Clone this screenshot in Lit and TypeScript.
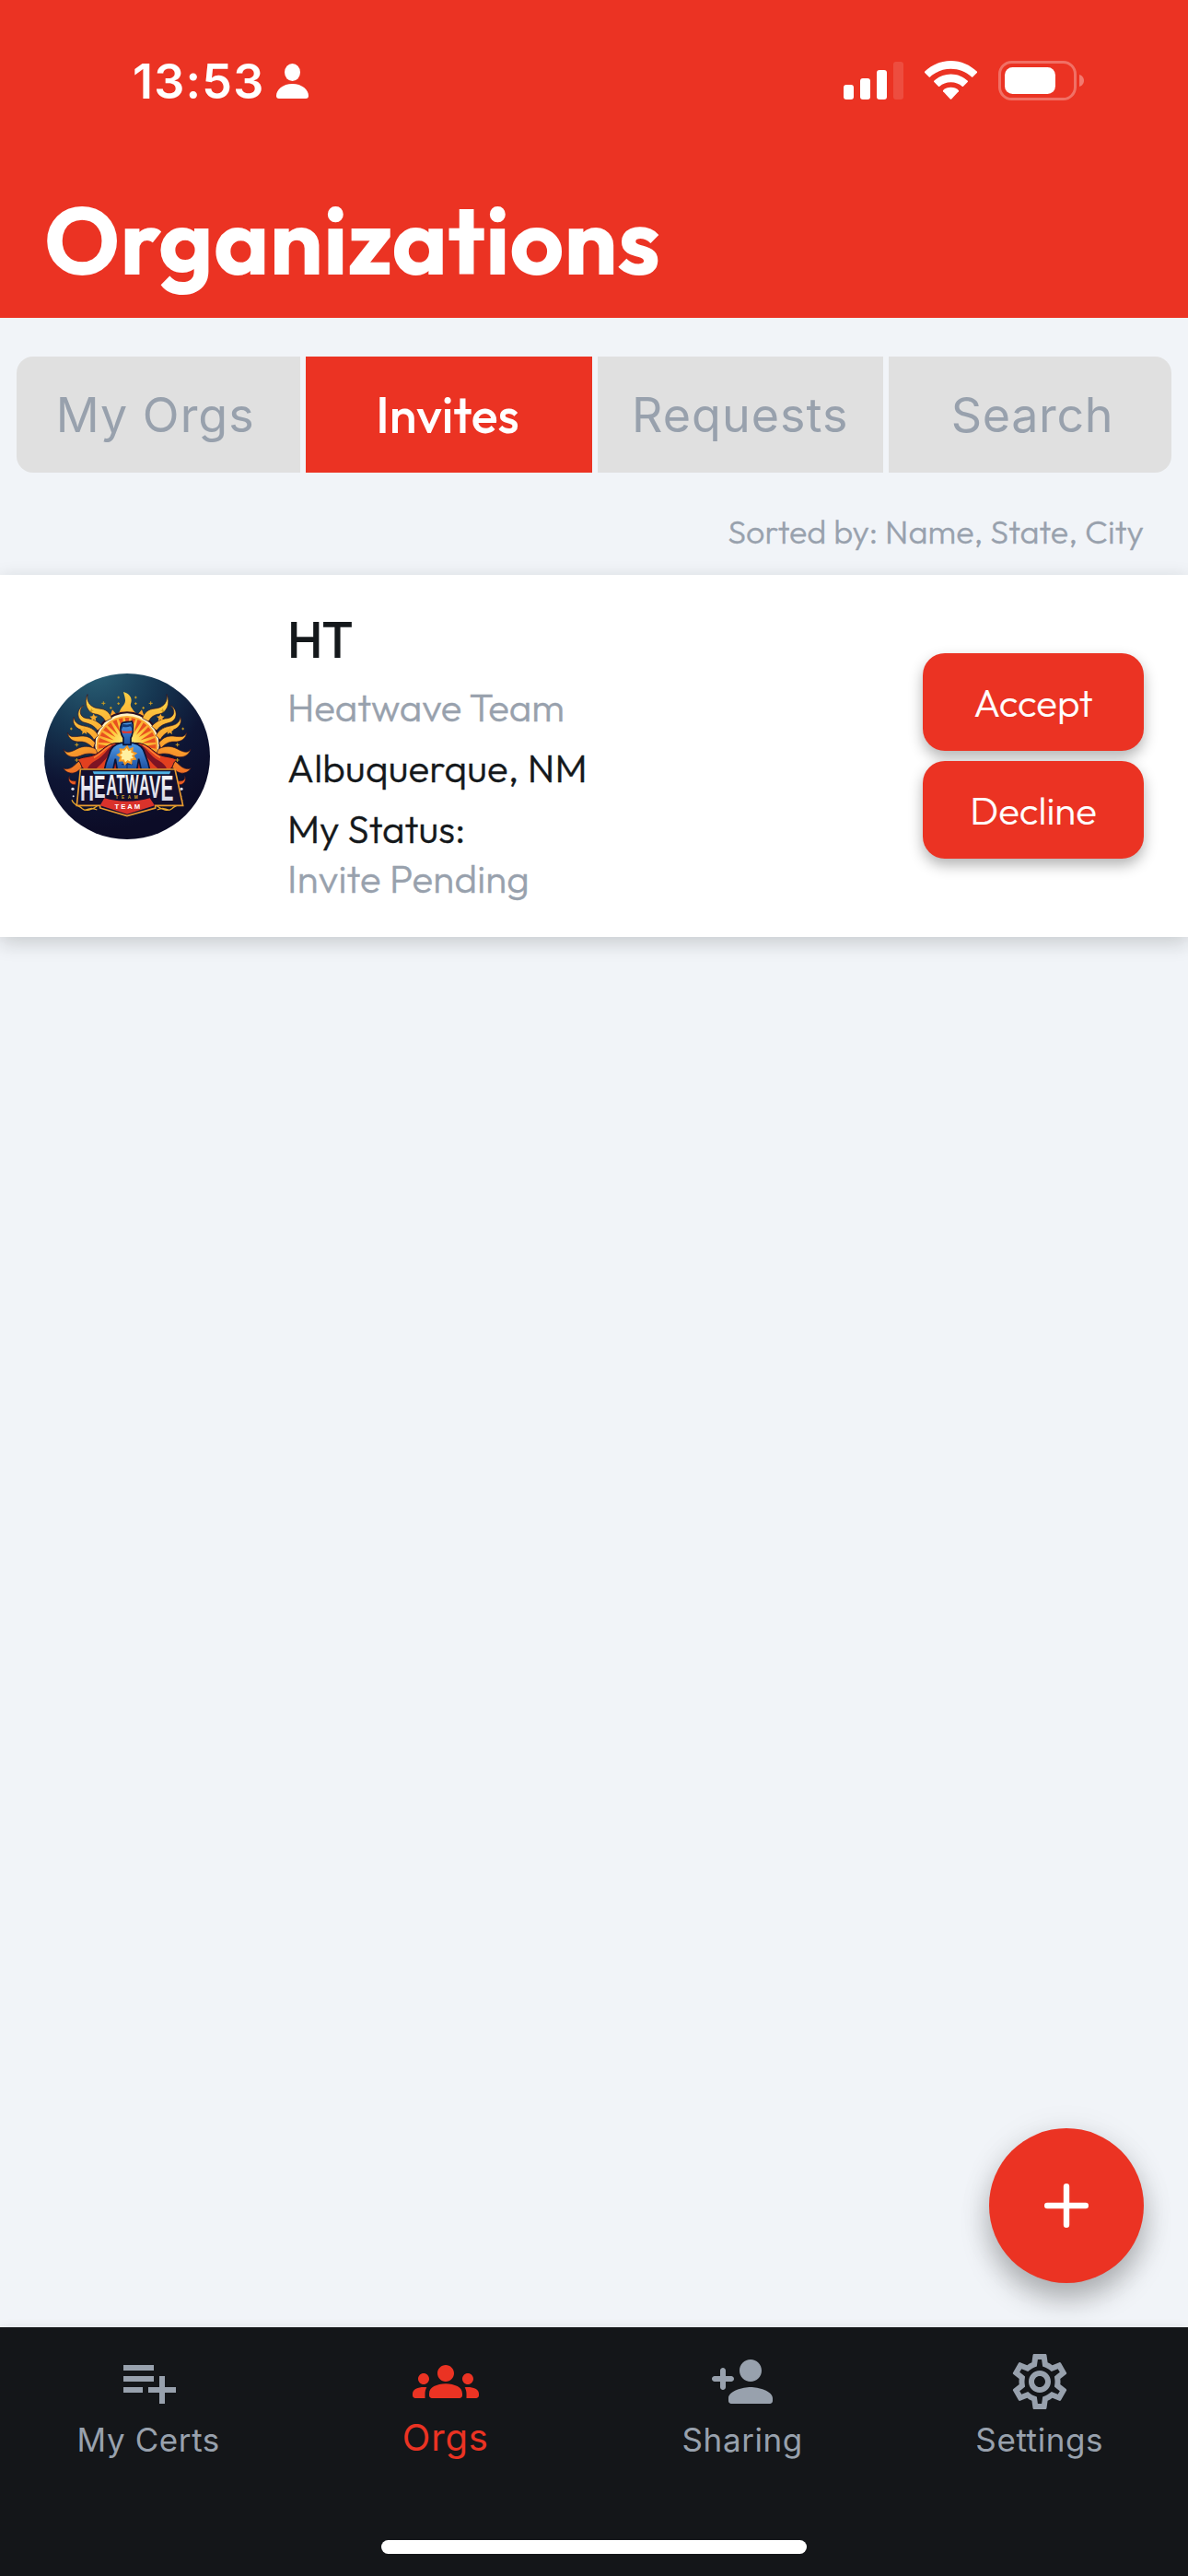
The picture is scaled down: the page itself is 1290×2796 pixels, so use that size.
import { LitElement, html, svg, css } from "lit";
import { customElement, property } from "lit/decorators.js";
import { classMap } from "lit/directives/class-map.js";

/** Round crest of the Heatwave Team. */
@customElement("team-crest")
export class TeamCrest extends LitElement {
  static styles = css`
    :host { display: block; width: 180px; height: 180px; }
    svg { display: block; width: 100%; height: 100%; }
  `;

  /** Flames, stars and cape for the left side; mirrored for the right. */
  private side() {
    return svg`
      <g fill="url(#flame)" stroke="#3a1420" stroke-width="2">
        <path d="M141 68 C136 92 152 112 178 114 C202 116 214 128 220 146 L200 156 C192 140 180 134 166 132 C140 128 128 96 141 68Z"/>
        <path d="M128 104 C112 118 114 142 138 146 C160 148 178 158 190 172 L174 186 C162 168 146 164 132 160 C104 152 104 116 128 104Z"/>
        <path d="M97 142 C98 164 116 168 134 172 C154 176 168 186 176 202 L162 216 C152 196 136 190 120 184 C98 176 90 158 97 142Z"/>
        <path d="M76 192 C82 210 100 206 120 204 C142 202 156 212 166 226 L160 244 C148 230 134 222 118 222 C94 224 78 212 76 192Z"/>
        <path d="M63 246 C70 262 88 256 106 246 C128 234 148 236 168 246 L176 266 C152 258 136 260 118 268 C94 278 68 270 63 246Z"/>
        <path d="M62 308 C78 316 92 306 106 292 C120 278 136 274 152 278 L146 300 C128 298 122 306 112 316 C96 330 72 326 62 308Z"/>
        <path d="M82 334 C80 346 88 352 104 350 L102 362 C84 364 76 348 82 334Z"/>
      </g>
      <path d="M244 226 C206 224 190 252 166 264 C146 274 124 270 106 282 C122 286 116 302 130 312 L216 312 L230 262Z" fill="#e2401f" stroke="#240d1d" stroke-width="3"/>
      <path d="M226 232 C204 244 196 270 166 284 C152 292 144 300 140 312 L168 312 C184 296 206 276 216 256Z" fill="#7d1424"/>
      <path d="M218 234 C196 244 186 262 162 274" fill="none" stroke="#ff8a35" stroke-width="4"/>
      <g fill="#f5a82c">
        <path d="M161 131 l4 8 9 1 -7 6 2 9 -8 -5 -8 5 2 -9 -7 -6 9 -1Z"/>
        <path d="M131 174 l4 8 9 1 -7 6 2 9 -8 -5 -8 5 2 -9 -7 -6 9 -1Z"/>
      </g>
      <g stroke="#c99b22" stroke-width="3">
        <path d="M193 91v12M187 97h12M242 74v8M238 78h8M242 94v8M238 98h8M154 115v12M148 121h12M106 226v12M100 232h12M106 276v12M100 282h12M217 108v8M213 112h8M88 176v8M84 180h8"/>
      </g>
      <circle cx="93" cy="376" r="5" fill="#d9dbe8"/>
      <circle cx="95" cy="400" r="3" fill="#d9dbe8"/>
      <path d="M90 412 C98 432 112 428 124 440 C136 450 156 444 172 432 M132 446 C146 440 154 436 172 444" fill="none" stroke="#e3a42b" stroke-width="4"/>
    `;
  }

  render() {
    const rays = Array.from({ length: 15 }, (_, i) => 180 + i * 12.86);
    return html`
      <svg viewBox="0 0 540 540" role="img" aria-label="Heatwave Team">
        <defs>
          <radialGradient id="night" cx="0.3" cy="-0.05" r="1">
            <stop offset="0" stop-color="#2c6479"/>
            <stop offset="0.4" stop-color="#163752"/>
            <stop offset="0.72" stop-color="#0e1534"/>
            <stop offset="1" stop-color="#0c0c27"/>
          </radialGradient>
          <linearGradient id="flame" gradientUnits="userSpaceOnUse" x1="90" y1="60" x2="180" y2="370">
            <stop offset="0" stop-color="#fbe04e"/>
            <stop offset="0.55" stop-color="#fba32d"/>
            <stop offset="1" stop-color="#e5421f"/>
          </linearGradient>
          <radialGradient id="sun" gradientUnits="userSpaceOnUse" cx="270" cy="225" r="104">
            <stop offset="0" stop-color="#fff08a"/>
            <stop offset="0.55" stop-color="#fdc93a"/>
            <stop offset="1" stop-color="#f9992d"/>
          </radialGradient>
          <linearGradient id="suit" x1="0" y1="0" x2="0" y2="1">
            <stop offset="0" stop-color="#4f9be6"/>
            <stop offset="1" stop-color="#1c4fa0"/>
          </linearGradient>
          <linearGradient id="steel" x1="0" y1="0" x2="0" y2="1">
            <stop offset="0" stop-color="#ffffff"/>
            <stop offset="1" stop-color="#cfd0e0"/>
          </linearGradient>
          <clipPath id="disc"><circle cx="270" cy="270" r="270"/></clipPath>
        </defs>
        <g clip-path="url(#disc)">
          <rect width="540" height="540" fill="url(#night)"/>
          <path d="M246 134 C242 112 266 104 264 86 C263 76 260 68 258 60 C280 66 288 82 282 98 C278 112 294 116 294 134Z" fill="url(#flame)"/>
          <path d="M196 150 L202 126 214 140 222 118 236 134 250 120 270 130 290 120 304 134 318 118 326 140 338 126 344 150Z" fill="#fba32d"/>
          <circle cx="270" cy="234" r="110" fill="#2b0f22"/>
          <circle cx="270" cy="234" r="104" fill="#fff3c4"/>
          <circle cx="270" cy="238" r="100" fill="url(#sun)"/>
          ${rays.map((a) => svg`<path d="M318 238 L364 231 V245Z" fill="#e8501f" transform="rotate(${a} 270 238)"/>`)}
          <g transform="matrix(-1 0 0 1 540 0)">${this.side()}</g>
          <g>${this.side()}</g>
          <path d="M222 312 L232 250 H308 L318 312Z" fill="#b3241f"/>
          <path d="M196 314 C200 290 206 276 212 262 C216 240 232 230 250 226 H290 C308 230 324 240 328 262 C334 276 340 290 344 314 L316 314 L308 278 L302 314 H238 L232 278 L224 314Z" fill="url(#suit)" stroke="#0c1233" stroke-width="5"/>
          <path d="M254 282 h32 M252 296 h36 M270 280 v32" stroke="#12316f" stroke-width="4"/>
          <path d="M258 232 V210 C248 196 246 176 252 164 C256 154 276 160 286 156 L289 166 C290 186 290 198 282 210 V232Z" fill="url(#suit)" stroke="#0c1233" stroke-width="5"/>
          <path d="M251 184 C250 174 252 168 256 165 C264 166 276 168 284 163 L289 184 C284 178 284 174 280 172 C272 176 262 175 257 173Z" fill="#123a78"/>
          <path d="M252 186 L269 189 287 186 284 195 269 194 256 195Z" fill="#e8372a"/>
          <path d="M270 238 l6 11 11 -5 -1 12 12 4 -9 8 7 10 -12 2 -1 12 -11 -6 -9 9 -5 -12 -12 1 4 -12 -10 -7 11 -6 -3 -12 12 1Z" fill="#fff0a0" stroke="#f59a24" stroke-width="6"/>
          <path d="M118 312 H426 L452 430 H362 V438 L270 464 182 438 V430 H106Z" fill="#140f2d" stroke="#e79a2f" stroke-width="5"/>
          <path d="M158 319 H412 L408 328 H162Z" fill="#4db2e6"/>
          <path d="M196 406 C240 420 300 420 344 406 L360 430 L270 458 182 430Z" fill="#d9322b"/>
          <g transform="scale(0.53 1)" fill="url(#steel)" font-family="'Liberation Sans', sans-serif" font-weight="700">
            <text y="414" font-size="118"><tspan x="221">H</tspan><tspan x="305" y="404" font-size="106">E</tspan><tspan x="380" y="396" font-size="94">A</tspan><tspan x="444" y="389" font-size="86">T</tspan><tspan x="499" y="389" font-size="86">W</tspan><tspan x="582" y="396" font-size="94">A</tspan><tspan x="646" y="404" font-size="106">V</tspan><tspan x="716" y="414" font-size="118">E</tspan></text>
          </g>
          <text x="274" y="407" fill="#d9a92e" font-family="'Liberation Sans', sans-serif" font-weight="700" font-size="14" letter-spacing="11" text-anchor="middle">TEAM</text>
          <text x="274" y="440" fill="#ffffff" font-family="'Liberation Sans', sans-serif" font-weight="700" font-size="23" letter-spacing="6" text-anchor="middle">TEAM</text>
        </g>
      </svg>
    `;
  }
}

@customElement("status-bar")
export class StatusBar extends LitElement {
  static styles = css`
    :host { display: flex; justify-content: space-between; align-items: center; height: 176px; padding: 0 113px 0 144px; color: #fff; }
    .group { display: flex; align-items: center; }
    .left { gap: 12px; }
    .right { gap: 23px; }
    .time { padding-top: 1px; font: 600 52px/64px Inter, "Liberation Sans", sans-serif; letter-spacing: 1.24px; }
    svg { display: block; fill: currentColor; }
  `;
  render() {
    return html`
      <div class="group left">
        <span class="time">13:53</span>
        <svg width="35" height="38" viewBox="0 0 35 38">
          <ellipse cx="17.5" cy="9.5" rx="8.5" ry="9.5"/>
          <path d="M17.5 22 C28 22 35 28.5 35 35 Q35 38 32 38 H3 Q0 38 0 35 C0 28.5 7 22 17.5 22Z"/>
        </svg>
      </div>
      <div class="group right">
        <svg width="65" height="44" viewBox="0 0 65 44">
          <rect x="0" y="26" width="11" height="16" rx="3"/>
          <rect x="18" y="19" width="11" height="23" rx="3"/>
          <rect x="36" y="10" width="11" height="32" rx="3"/>
          <rect x="54" y="1" width="11" height="41" rx="3" opacity="0.13"/>
        </svg>
        <svg width="57" height="44" viewBox="0 0 57 44">
          <path d="M28.5 0 C39.5 0 49.5 4.5 57 11.8 Q57.4 12.4 56.8 13 L52.3 17.5 Q51.6 18 51 17.5 C45 12 37 8.8 28.5 8.8 C20 8.8 12 12 6 17.5 Q5.4 18 4.7 17.5 L0.2 13 Q-0.4 12.4 0 11.8 C7.5 4.5 17.5 0 28.5 0Z"/>
          <path d="M28.5 14.5 C35.5 14.5 42 17.3 46.8 21.8 Q47.3 22.4 46.7 23 L42 27.7 Q41.3 28.2 40.7 27.7 C37.5 24.9 33.3 23.2 28.5 23.2 C23.7 23.2 19.5 24.9 16.3 27.7 Q15.7 28.2 15 27.7 L10.3 23 Q9.7 22.4 10.2 21.8 C15 17.3 21.5 14.5 28.5 14.5Z"/>
          <path d="M28.5 28.8 C31.7 28.8 34.7 30 36.9 32 Q37.4 32.6 36.9 33.2 L29.2 41.5 Q28.5 42.2 27.8 41.5 L20.1 33.2 Q19.6 32.6 20.1 32 C22.3 30 25.3 28.8 28.5 28.8Z"/>
        </svg>
        <svg width="93" height="44" viewBox="0 0 93 44">
          <rect x="1.5" y="1.5" width="82" height="40" rx="13" fill="none" stroke="#fff" stroke-width="3" opacity="0.3"/>
          <rect x="7" y="7" width="55" height="29" rx="8.5"/>
          <path d="M88 15 C91.5 16 93 19 93 21.5 C93 24 91.5 27 88 28Z" opacity="0.35"/>
        </svg>
      </div>
    `;
  }
}

interface NavItem {
  id: string;
  label: string;
  icon: unknown;
}

const NAV: NavItem[] = [
  { id: "certs", label: "My Certs", icon: svg`<path d="M14 10H3v2h11v-2zm0-4H3v2h11V6zm4 8v-4h-2v4h-4v2h4v4h2v-4h4v-2h-4zM3 16h7v-2H3v2z"/>` },
  { id: "orgs", label: "Orgs", icon: svg`<path d="M12 12.75c1.63 0 3.07.39 4.24.9 1.08.48 1.76 1.56 1.76 2.73V17c0 .55-.45 1-1 1H7c-.55 0-1-.45-1-1v-.61c0-1.18.68-2.26 1.76-2.73 1.17-.52 2.61-.91 4.24-.91zM4 13c1.1 0 2-.9 2-2s-.9-2-2-2-2 .9-2 2 .9 2 2 2zm1.13 1.1C4.76 14.04 4.39 14 4 14c-.99 0-1.93.21-2.78.58C.48 14.9 0 15.62 0 16.43V17c0 .55.45 1 1 1h3.5v-1.61c0-.83.23-1.61.63-2.29zM20 13c1.1 0 2-.9 2-2s-.9-2-2-2-2 .9-2 2 .9 2 2 2zm4 3.43c0-.81-.48-1.53-1.22-1.85-.85-.37-1.79-.58-2.78-.58-.39 0-.76.04-1.13.1.4.68.63 1.46.63 2.29V18H23c.55 0 1-.45 1-1v-.57zM12 6c1.66 0 3 1.34 3 3s-1.34 3-3 3-3-1.34-3-3 1.34-3 3-3z"/>` },
  { id: "sharing", label: "Sharing", icon: svg`<path d="M15 12c2.21 0 4-1.79 4-4s-1.79-4-4-4-4 1.79-4 4 1.79 4 4 4zm-9-2V8c0-.55-.45-1-1-1s-1 .45-1 1v2H2c-.55 0-1 .45-1 1s.45 1 1 1h2v2c0 .55.45 1 1 1s1-.45 1-1v-2h2c.55 0 1-.45 1-1s-.45-1-1-1H6zm9 4c-2.67 0-8 1.34-8 4v1c0 .55.45 1 1 1h14c.55 0 1-.45 1-1v-1c0-2.66-5.33-4-8-4z"/>` },
  { id: "settings", label: "Settings", icon: svg`<path d="M19.43 12.98c.04-.32.07-.64.07-.98 0-.34-.03-.66-.07-.98l2.11-1.65c.19-.15.24-.42.12-.64l-2-3.46c-.09-.16-.26-.25-.44-.25-.06 0-.12.01-.17.03l-2.49 1c-.52-.4-1.08-.73-1.69-.98l-.38-2.65C14.46 2.18 14.25 2 14 2h-4c-.25 0-.46.18-.49.42l-.38 2.65c-.61.25-1.17.59-1.69.98l-2.49-1c-.06-.02-.12-.03-.18-.03-.17 0-.34.09-.43.25l-2 3.46c-.13.22-.07.49.12.64l2.11 1.65c-.04.32-.07.65-.07.98 0 .33.03.66.07.98l-2.11 1.65c-.19.15-.24.42-.12.64l2 3.46c.09.16.26.25.44.25.06 0 .12-.01.17-.03l2.49-1c.52.4 1.08.73 1.69.98l.38 2.65c.03.24.24.42.49.42h4c.25 0 .46-.18.49-.42l.38-2.65c.61-.25 1.17-.59 1.69-.98l2.49 1c.06.02.12.03.18.03.17 0 .34-.09.43-.25l2-3.46c.12-.22.07-.49-.12-.64l-2.11-1.65zm-1.98-1.71c.04.31.05.52.05.73 0 .21-.02.43-.05.73l-.14 1.13.89.7 1.08.84-.7 1.21-1.27-.51-1.04-.42-.9.68c-.43.32-.84.56-1.25.73l-1.06.43-.16 1.13-.2 1.35h-1.4l-.19-1.35-.16-1.13-1.06-.43c-.43-.18-.83-.41-1.23-.71l-.91-.7-1.06.43-1.27.51-.7-1.21 1.08-.84.89-.7-.14-1.13c-.03-.31-.05-.54-.05-.74s.02-.43.05-.73l.14-1.13-.89-.7-1.08-.84.7-1.21 1.27.51 1.04.42.9-.68c.43-.32.84-.56 1.25-.73l1.06-.43.16-1.13.2-1.35h1.39l.19 1.35.16 1.13 1.06.43c.43.18.83.41 1.23.71l.91.7 1.06-.43 1.27-.51.7 1.21-1.07.85-.89.7.14 1.13zM12 8c-2.21 0-4 1.79-4 4s1.79 4 4 4 4-1.79 4-4-1.79-4-4-4zm0 6c-1.1 0-2-.9-2-2s.9-2 2-2 2 .9 2 2-.9 2-2 2z"/>` },
];

@customElement("nav-bar")
export class NavBar extends LitElement {
  static styles = css`
    :host { display: grid; grid-template-columns: repeat(4, 1fr); position: relative; height: 270px; box-sizing: border-box; padding-top: 23px; background: #141619; box-shadow: 0 0 10px rgba(20, 24, 27, 0.08); }
    .item { display: flex; flex-direction: column; align-items: center; color: #98a1ad; font: 400 35px/48px Inter, "Liberation Sans", sans-serif; letter-spacing: 0.6px; }
    .label { padding-top: 3px; }
    .active { color: #eb3323; font-size: 40px; letter-spacing: 0.83px; }
    .active .label { padding-top: 1px; }
    svg { display: block; width: 72px; height: 72px; fill: currentColor; }
    .home { position: absolute; left: 414px; bottom: 24px; width: 462px; height: 15px; border-radius: 8px; background: #fff; }
  `;
  @property() current = "orgs";
  render() {
    return html`
      ${NAV.map((n) => html`
        <div class=${classMap({ item: true, active: n.id === this.current })}>
          <svg viewBox="0 0 24 24">${n.icon}</svg>
          <span class="label">${n.label}</span>
        </div>`)}
      <div class="home"></div>
    `;
  }
}

@customElement("app-root")
export class AppRoot extends LitElement {
  static styles = css`
    :host { display: flex; flex-direction: column; position: relative; height: 2796px; width: 1290px; overflow: hidden; background: #f1f4f8; font-family: Outfit, Lato, "Liberation Sans", sans-serif; }
    .header { height: 345px; background: #eb3323; color: #fff; }
    .title { margin: 0; padding: 24px 0 0 48px; font-size: 102px; line-height: 122px; font-weight: 700; }
    .tabs { display: grid; grid-template-columns: 307.5px 311px 310.5px 307px; gap: 6px; height: 126px; margin: 42px 18px 0; border-radius: 18px; overflow: hidden; }
    .tab { display: flex; align-items: center; justify-content: center; padding-top: 2px; background: #e0e0e0; color: #98a1ad; font: 400 52px/64px Inter, "Liberation Sans", sans-serif; letter-spacing: 1px; }
    .tab:first-child { padding-right: 6px; }
    .tab:last-child { padding-left: 5px; letter-spacing: 0.64px; }
    .tab.on { padding: 0 2px 0 0; background: #eb3323; color: #fff; font-family: Outfit, Lato, "Liberation Sans", sans-serif; font-size: 54px; font-weight: 500; letter-spacing: -0.1px; }
    .sorted { margin: 43px 48px 26px; text-align: right; color: #98a1ad; font-size: 36px; line-height: 42px; font-weight: 300; letter-spacing: 0.05px; -webkit-text-stroke: 0.3px; }
    .card { display: flex; align-items: center; height: 393px; padding: 0 48px; background: #fff; box-shadow: 0 6px 20px rgba(20, 24, 27, 0.19); }
    .info { display: flex; flex-direction: column; align-self: flex-start; flex: 1; padding: 40px 0 0 84px; font-size: 42px; line-height: 54px; font-weight: 300; -webkit-text-stroke: 0.4px; color: #14181b; }
    .code { font-size: 54px; line-height: 61px; font-weight: 500; letter-spacing: -0.8px; -webkit-text-stroke: 0; }
    .name { margin: 16px 0 12px; letter-spacing: -0.07px; }
    .place { margin-bottom: 12px; letter-spacing: 0.2px; }
    .pending { letter-spacing: 0.2px; }
    .muted { color: #98a1ad; }
    .actions { display: flex; flex-direction: column; gap: 11px; }
    .btn { display: flex; align-items: center; justify-content: center; width: 240px; height: 106px; box-sizing: border-box; padding: 0; border: 0; border-radius: 24px; background: #eb3323; color: #fff; font: inherit; font-size: 42px; font-weight: 300; -webkit-text-stroke: 0.2px; box-shadow: 0 7px 15px rgba(0, 0, 0, 0.3); }
    .spacer { flex: 1; }
    .fab { position: absolute; right: 48px; top: 2310px; display: grid; place-items: center; width: 168px; height: 168px; border-radius: 50%; background: #eb3323; box-shadow: 0 18px 30px rgba(0, 0, 0, 0.26), 0 3px 36px rgba(0, 0, 0, 0.08); }
    .fab svg { width: 48px; height: 48px; stroke: #fff; stroke-width: 6.4; stroke-linecap: round; }
  `;
  render() {
    return html`
      <header class="header">
        <status-bar></status-bar>
        <h1 class="title">Organizations</h1>
      </header>
      <div class="tabs">
        ${["My Orgs", "Invites", "Requests", "Search"].map((t) => html`<div class=${classMap({ tab: true, on: t === "Invites" })}>${t}</div>`)}
      </div>
      <div class="sorted">Sorted by: Name, State, City</div>
      <section class="card">
        <team-crest></team-crest>
        <div class="info">
          <span class="code">HT</span>
          <span class="name muted">Heatwave Team</span>
          <span class="place">Albuquerque, NM</span>
          <span>My Status:</span>
          <span class="pending muted">Invite Pending</span>
        </div>
        <div class="actions">
          <button class="btn">Accept</button>
          <button class="btn">Decline</button>
        </div>
      </section>
      <div class="spacer"></div>
      <nav-bar current="orgs"></nav-bar>
      <div class="fab">
        <svg viewBox="0 0 48 48"><path d="M24 3.2V44.8M3.2 24H44.8"/></svg>
      </div>
    `;
  }
}
